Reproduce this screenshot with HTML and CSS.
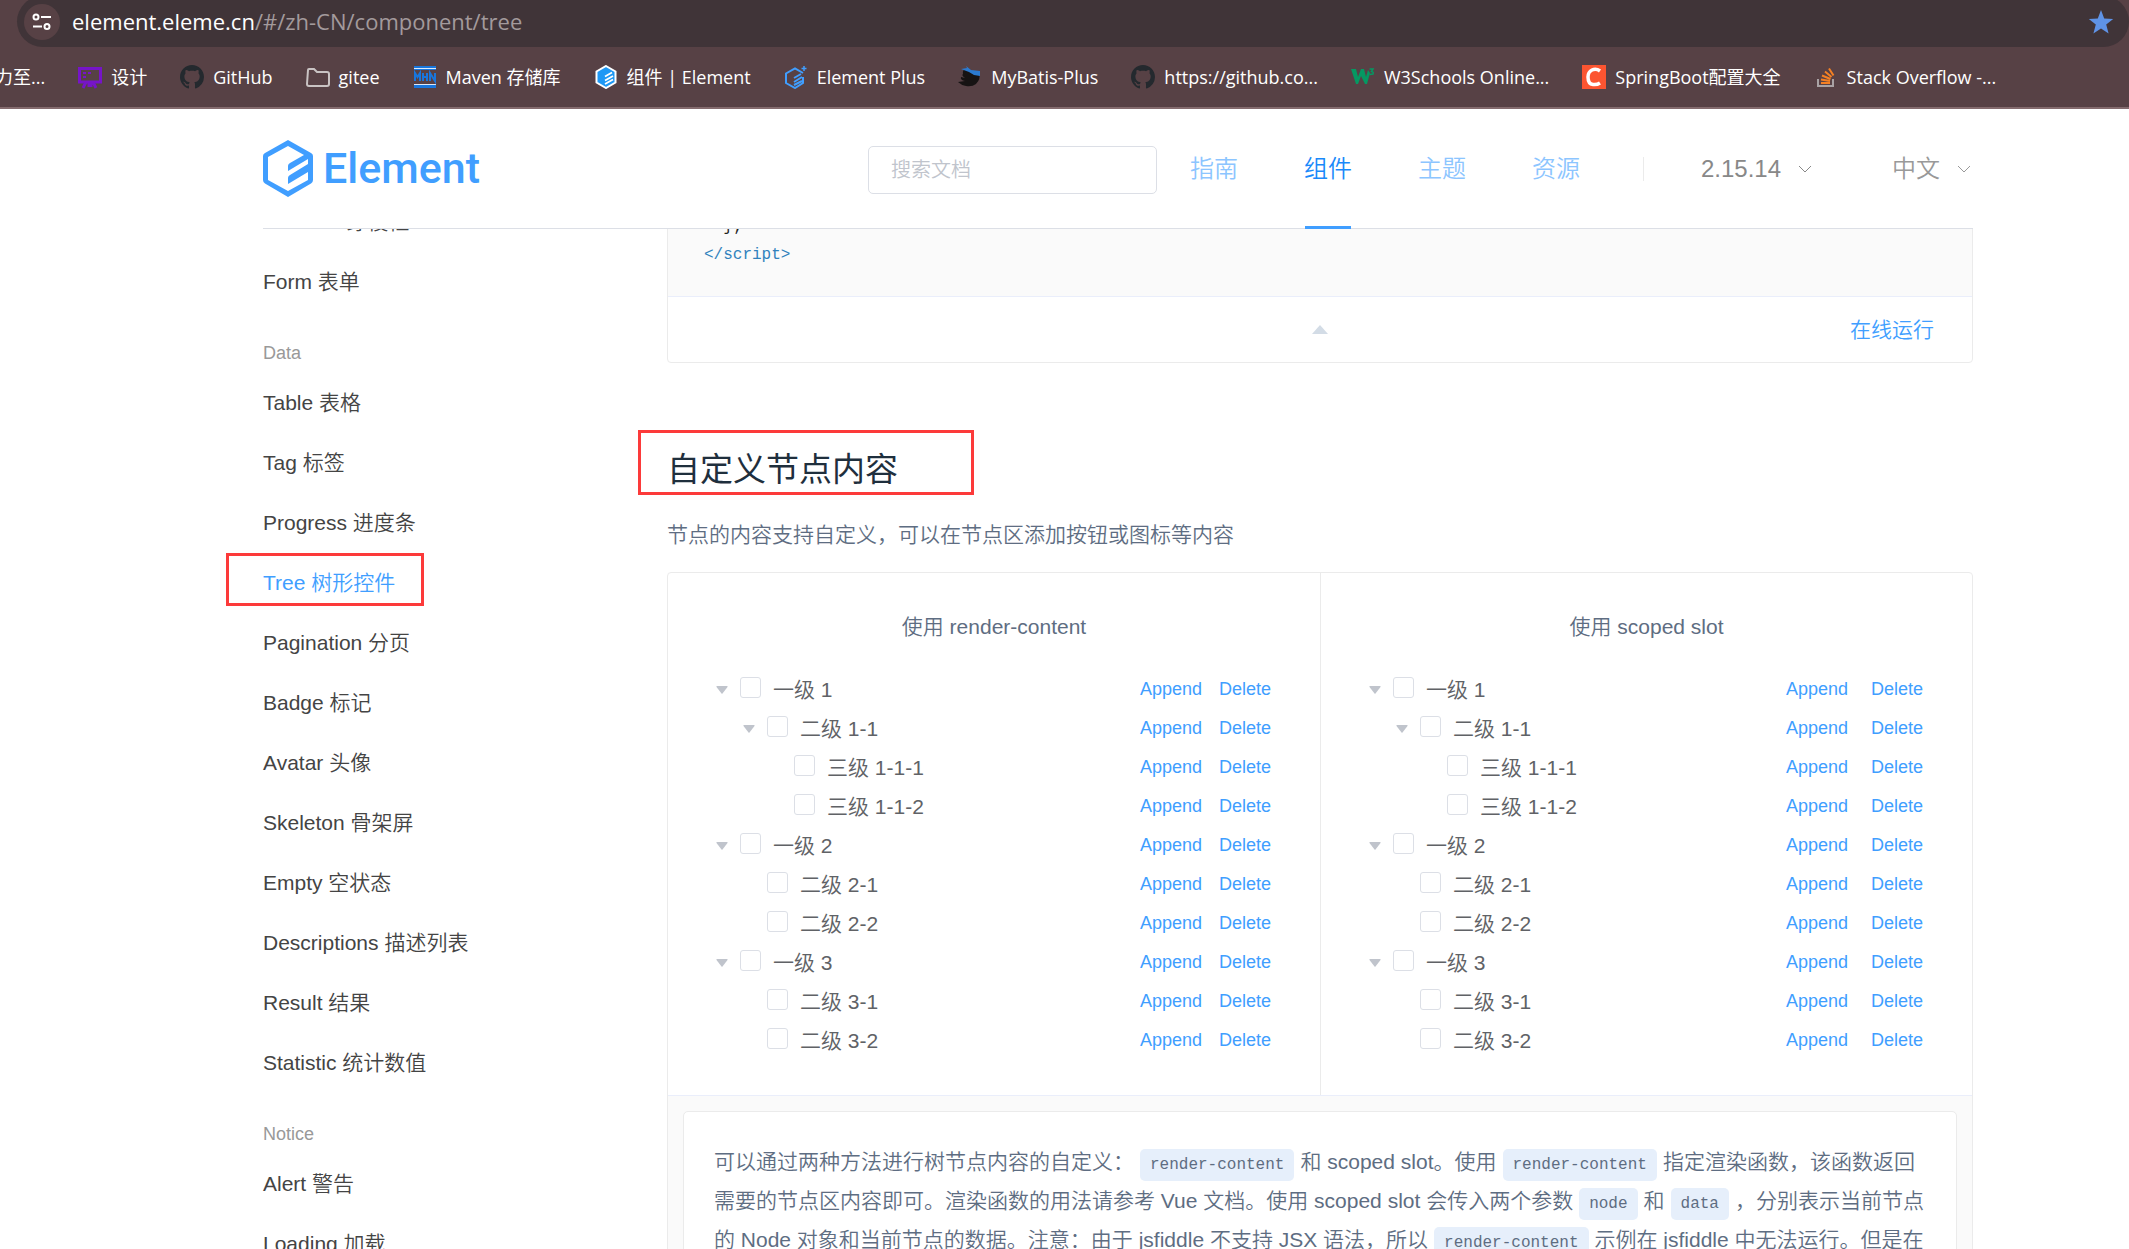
FILE: index.html
```html
<!DOCTYPE html>
<html lang="zh-CN">
<head>
<meta charset="utf-8">
<title>Element</title>
<link rel="stylesheet" href="styles.css">
</head>
<body>
<svg class="defs" aria-hidden="true">
  <symbol id="github" viewBox="0 0 16 16"><path fill="#24292e" d="M8 0C3.58 0 0 3.58 0 8c0 3.54 2.29 6.53 5.47 7.59.4.07.55-.17.55-.38 0-.19-.01-.82-.01-1.49-2.01.37-2.53-.49-2.69-.94-.09-.23-.48-.94-.82-1.13-.28-.15-.68-.52-.01-.53.63-.01 1.08.58 1.23.82.72 1.21 1.87.87 2.33.66.07-.52.28-.87.51-1.07-1.78-.2-3.64-.89-3.64-3.95 0-.87.31-1.59.82-2.15-.08-.2-.36-1.02.08-2.12 0 0 .67-.21 2.2.82.64-.18 1.32-.27 2-.27s1.36.09 2 .27c1.53-1.04 2.2-.82 2.2-.82.44 1.1.16 1.92.08 2.12.51.56.82 1.27.82 2.15 0 3.07-1.87 3.75-3.65 3.95.29.25.54.73.54 1.48 0 1.07-.01 1.93-.01 2.2 0 .21.15.46.55.38A8.01 8.01 0 0 0 16 8c0-4.42-3.58-8-8-8z"/></symbol>
  <symbol id="hexagon" viewBox="0 0 50 57"><path fill-rule="evenodd" d="M25 0 48 13Q50 14 50 16V40Q50 42 48 43.500L25 57 2 43.500Q0 42 0 40V16Q0 14 2 13ZM25 6 5 17V40L25 51 45 40V32L25 44V38Q25 36 27 35L45 24V19L25 31V26Q25 24 27 23L41 15Z"/></symbol>
  <symbol id="caret" viewBox="0 0 14 8"><path d="M1 1 7 7 13 1" fill="none" stroke="currentColor"/></symbol>
  <symbol id="expand" viewBox="0 0 12 8"><path d="M1 0H11Q12 0 11.500 1L6.500 7.500Q6 8 5.500 7.500L.5 1Q0 0 1 0Z" fill="currentColor"/></symbol>
</svg>

<div class="browser">
  <div class="address">
    <button class="site-info" aria-label="网站信息"><svg width="20" height="18" viewBox="0 0 20 18" fill="none" stroke="#fff" stroke-width="2"><circle cx="4" cy="4" r="2.500"/><path d="M9 4H19M1 13.500H10"/><circle cx="15" cy="13.500" r="2.500"/></svg></button>
    <span class="url"><b>element.eleme.cn</b>/#/zh-CN/component/tree</span>
    <svg class="star" width="26" height="24" viewBox="0 0 26 24"><path fill="#5f93e6" d="m13 0 3.200 8.500 9 .4-7 5.700 2.400 8.900-7.600-5-7.600 5 2.400-8.900-7-5.700 9-.4Z"/></svg>
  </div>
  <nav class="bookmarks" aria-label="书签">
    <a href="#">力至...</a>
    <a href="#"><svg viewBox="0 0 24 24"><path d="M1.500 3.500H22.500V17H1.500Z" fill="none" stroke="#7614c8" stroke-width="3"/><path d="M8 17 5 23M15 17 18 23M11 17V22M13 17V22" stroke="#7614c8" stroke-width="3"/><path d="M5 7H8V9H5ZM10 7H13V9H10ZM5 11H8V13H5Z" fill="#7614c8"/></svg>设计</a>
    <a href="#"><svg><use href="#github"/></svg>GitHub</a>
    <a href="#"><svg viewBox="0 0 24 24"><path d="M2 5Q2 4 3 4H8L11 7H21Q23 7 23 9V19Q23 21 21 21H3Q1 21 1 19Z" fill="none" stroke="#c9c3c3" stroke-width="2"/></svg>gitee</a>
    <a href="#"><svg viewBox="0 0 24 24"><path fill="#1976dc" d="M1 1H23V5H1ZM1 20H23V23H1Z"/><path stroke="#dce8f8" d="M1 3.500H23M1 19.500H23"/><path d="M2 16V8L4.500 12 7 8V16M10 8V16M14 8V16M10 12H14M17 16V8L22 16V8" fill="none" stroke="#1976dc" stroke-width="2"/></svg>Maven 存储库</a>
    <a href="#"><svg viewBox="0 0 24 24"><path d="M12 1 21.500 6.500V17.500L12 23 2.500 17.500V6.500Z" fill="#1e98f5" stroke="#fff" stroke-width="2"/><path d="M11 11.500 18 7.500M11 15.500 19 11M11 19 19 14.500" stroke="#fff" stroke-width="1.800"/></svg>组件 | Element</a>
    <a href="#"><svg viewBox="0 0 24 24"><path d="M19 8 11 3.500 2 8.500V18L11 23 19 18V12M10 13 17 9M10 17 18 12M10 20 18 16" fill="none" stroke="#409eff" stroke-width="2"/><path d="M20 1V6M17.500 3.500H22.500" stroke="#409eff" stroke-width="1.500"/></svg>Element Plus</a>
    <a href="#"><svg viewBox="0 0 24 24"><path d="M5 9Q4 3 10 5L21 8Q23 14 18 19 14 22 8 21 3 20 0 17L7 16Q2 15 3 12L7 13Q3 10 5 9Z" fill="#161313"/><path d="M3 4 9 3 8 1 13 5 22 6V11L16 10 11 7Z" fill="#2b7ad0"/></svg>MyBatis-Plus</a>
    <a href="#"><svg><use href="#github"/></svg>https://github.co...</a>
    <a href="#"><svg viewBox="0 0 24 24"><path d="M0 4H5L7 12 10 4H13L15 12 17 5 19 8 16 19H14L10 11 7 19H5Z" fill="#059862"/><path d="M18.500 4H22L20.500 6.500Q23 7 22 9L18.500 9.500" fill="none" stroke="#059862" stroke-width="1.500"/></svg>W3Schools Online...</a>
    <a href="#"><svg viewBox="0 0 24 24"><path fill="#fc5531" d="M0 0H24V24H0Z"/><path d="M18 6Q14 3 10 5 6 7 6 12 6 19 11 19.500 15 20 18 18" fill="none" stroke="#fff" stroke-width="3.500"/></svg>SpringBoot配置大全</a>
    <a href="#"><svg viewBox="0 0 24 24"><path d="M4 14V21H19V14" fill="none" stroke="#a9a2a4" stroke-width="2"/><path d="M7 18H16M7 14.500 16 16M8 10.500 16.500 14M11 6.500 17.500 12M15 3.500 19.500 10.500" stroke="#f48024" stroke-width="2"/></svg>Stack Overflow -...</a>
  </nav>
</div>

<header class="header">
  <a class="logo" href="#"><svg width="50" height="57" fill="#409eff"><use href="#hexagon"/></svg>Element</a>
  <input class="search" type="text" placeholder="搜索文档" aria-label="搜索文档">
  <nav class="nav">
    <a href="#">指南</a>
    <a href="#" class="active">组件</a>
    <a href="#">主题</a>
    <a href="#">资源</a>
  </nav>
  <div class="selectors">
    <button class="version">2.15.14<svg><use href="#caret"/></svg></button>
    <button>中文<svg><use href="#caret"/></svg></button>
  </div>
</header>

<main class="main">
  <nav class="side" aria-label="组件">
    <ul>
      <li><a href="#">Transfer 穿梭框</a></li>
      <li><a href="#">Form 表单</a></li>
    </ul>
    <h4>Data</h4>
    <ul>
      <li><a href="#">Table 表格</a></li>
      <li><a href="#">Tag 标签</a></li>
      <li><a href="#">Progress 进度条</a></li>
      <li class="current"><a href="#">Tree 树形控件</a></li>
      <li><a href="#">Pagination 分页</a></li>
      <li><a href="#">Badge 标记</a></li>
      <li><a href="#">Avatar 头像</a></li>
      <li><a href="#">Skeleton 骨架屏</a></li>
      <li><a href="#">Empty 空状态</a></li>
      <li><a href="#">Descriptions 描述列表</a></li>
      <li><a href="#">Result 结果</a></li>
      <li><a href="#">Statistic 统计数值</a></li>
    </ul>
    <h4>Notice</h4>
    <ul>
      <li><a href="#">Alert 警告</a></li>
      <li><a href="#">Loading 加载</a></li>
    </ul>
  </nav>

  <article class="content">
    <section class="demo demo-top">
      <pre class="code"><span class="plain">  };</span>
&lt;/script&gt;</pre>
      <div class="control">
        <button class="fold" aria-label="隐藏代码"><svg width="16" height="9" viewBox="0 0 16 9"><path d="M8 0 16 9H0Z" fill="#d3dce6"/></svg></button>
        <button class="run">在线运行</button>
      </div>
    </section>

    <h3>自定义节点内容</h3>
    <p class="intro">节点的内容支持自定义，可以在节点区添加按钮或图标等内容</p>

    <section class="demo">
      <div class="trees">
        <div class="block">
          <p>使用 render-content</p>
          <ul class="tree">
            <li><div class="row"><button class="toggle" aria-label="折叠"><svg><use href="#expand"/></svg></button><label><input type="checkbox">一级 1</label><span class="ops"><button>Append</button><button>Delete</button></span></div>
              <ul>
                <li><div class="row"><button class="toggle" aria-label="折叠"><svg><use href="#expand"/></svg></button><label><input type="checkbox">二级 1-1</label><span class="ops"><button>Append</button><button>Delete</button></span></div>
                  <ul>
                    <li><div class="row leaf"><label><input type="checkbox">三级 1-1-1</label><span class="ops"><button>Append</button><button>Delete</button></span></div></li>
                    <li><div class="row leaf"><label><input type="checkbox">三级 1-1-2</label><span class="ops"><button>Append</button><button>Delete</button></span></div></li>
                  </ul></li>
              </ul></li>
            <li><div class="row"><button class="toggle" aria-label="折叠"><svg><use href="#expand"/></svg></button><label><input type="checkbox">一级 2</label><span class="ops"><button>Append</button><button>Delete</button></span></div>
              <ul>
                <li><div class="row leaf"><label><input type="checkbox">二级 2-1</label><span class="ops"><button>Append</button><button>Delete</button></span></div></li>
                <li><div class="row leaf"><label><input type="checkbox">二级 2-2</label><span class="ops"><button>Append</button><button>Delete</button></span></div></li>
              </ul></li>
            <li><div class="row"><button class="toggle" aria-label="折叠"><svg><use href="#expand"/></svg></button><label><input type="checkbox">一级 3</label><span class="ops"><button>Append</button><button>Delete</button></span></div>
              <ul>
                <li><div class="row leaf"><label><input type="checkbox">二级 3-1</label><span class="ops"><button>Append</button><button>Delete</button></span></div></li>
                <li><div class="row leaf"><label><input type="checkbox">二级 3-2</label><span class="ops"><button>Append</button><button>Delete</button></span></div></li>
              </ul></li>
          </ul>
        </div>
        <div class="block slot">
          <p>使用 scoped slot</p>
          <ul class="tree">
            <li><div class="row"><button class="toggle" aria-label="折叠"><svg><use href="#expand"/></svg></button><label><input type="checkbox">一级 1</label><span class="ops"><button>Append</button><button>Delete</button></span></div>
              <ul>
                <li><div class="row"><button class="toggle" aria-label="折叠"><svg><use href="#expand"/></svg></button><label><input type="checkbox">二级 1-1</label><span class="ops"><button>Append</button><button>Delete</button></span></div>
                  <ul>
                    <li><div class="row leaf"><label><input type="checkbox">三级 1-1-1</label><span class="ops"><button>Append</button><button>Delete</button></span></div></li>
                    <li><div class="row leaf"><label><input type="checkbox">三级 1-1-2</label><span class="ops"><button>Append</button><button>Delete</button></span></div></li>
                  </ul></li>
              </ul></li>
            <li><div class="row"><button class="toggle" aria-label="折叠"><svg><use href="#expand"/></svg></button><label><input type="checkbox">一级 2</label><span class="ops"><button>Append</button><button>Delete</button></span></div>
              <ul>
                <li><div class="row leaf"><label><input type="checkbox">二级 2-1</label><span class="ops"><button>Append</button><button>Delete</button></span></div></li>
                <li><div class="row leaf"><label><input type="checkbox">二级 2-2</label><span class="ops"><button>Append</button><button>Delete</button></span></div></li>
              </ul></li>
            <li><div class="row"><button class="toggle" aria-label="折叠"><svg><use href="#expand"/></svg></button><label><input type="checkbox">一级 3</label><span class="ops"><button>Append</button><button>Delete</button></span></div>
              <ul>
                <li><div class="row leaf"><label><input type="checkbox">二级 3-1</label><span class="ops"><button>Append</button><button>Delete</button></span></div></li>
                <li><div class="row leaf"><label><input type="checkbox">二级 3-2</label><span class="ops"><button>Append</button><button>Delete</button></span></div></li>
              </ul></li>
          </ul>
        </div>
      </div>
      <div class="meta">
        <p class="description">可以通过两种方法进行树节点内容的自定义：<code>render-content</code>和 scoped slot。使用<code>render-content</code>指定渲染函数，该函数返回需要的节点区内容即可。渲染函数的用法请参考 Vue 文档。使用 scoped slot 会传入两个参数<code>node</code>和<code>data</code>，分别表示当前节点的 Node 对象和当前节点的数据。注意：由于 jsfiddle 不支持 JSX 语法，所以<code>render-content</code>示例在 jsfiddle 中无法运行。但是在</p>
      </div>
    </section>
  </article>
</main>
</body>
</html>
```

FILE: styles.css
```css
*,
*::after {
  box-sizing: border-box;
}

body {
  display: flex;
  flex-direction: column;
  height: 100vh;
  margin: 0;
  overflow: hidden;
  background: #fff;
  color: #606266;
  font: 21px/39px "Liberation Sans", "Noto Sans CJK SC", sans-serif;
  font-weight: 350;
}

a {
  color: inherit;
  text-decoration: none;
}

button {
  padding: 0;
  border: 0;
  background: none;
  color: inherit;
  font: inherit;
}

ul {
  margin: 0;
  padding: 0;
  list-style: none;
}

.defs {
  position: absolute;
  width: 0;
  height: 0;
}

/* browser chrome */
.browser {
  flex: none;
  overflow: hidden;
  border-bottom: 2px solid #846b6e;
  background: #574145;
  color: #fff;
  font-family: "Open Sans", "Noto Sans CJK SC", sans-serif;
  font-weight: 400;
}

.address {
  display: flex;
  align-items: center;
  height: 51px;
  margin: -4px 0 0 17px;
  padding: 0 15px 0 7px;
  border-radius: 26px;
  background: #403438;
}

.site-info {
  display: grid;
  place-items: center;
  width: 36px;
  height: 36px;
  border-radius: 50%;
  background: #574145;
}

.url {
  flex: 1;
  margin-left: 12px;
  color: #a39a9c;
  font-size: 22px;
}

.url b {
  color: #fff;
  font-weight: 400;
}

.bookmarks {
  display: flex;
  gap: 33px;
  height: 60px;
  margin-left: -5px;
  font-size: 18px;
  line-height: 60px;
  white-space: nowrap;
}

.bookmarks a {
  display: flex;
  align-items: center;
  gap: 9px;
}

.bookmarks svg {
  width: 24px;
  height: 24px;
}

/* site header */
.header {
  display: flex;
  flex: none;
  align-items: center;
  height: 120px;
  margin: 0 156px 0 263px;
  border-bottom: 1px solid #dcdfe6;
}

.logo {
  display: flex;
  align-items: center;
  gap: 10px;
  margin-right: auto;
  color: #409eff;
  font: 500 43px/57px Roboto, sans-serif;
}

.search {
  width: 289px;
  height: 48px;
  margin-top: 2px;
  padding: 2px 22px 0;
  border: 1px solid #dcdfe6;
  border-radius: 5px;
  font: inherit;
  font-size: 20px;
}

.search::placeholder {
  color: #c0c4cc;
}

.nav {
  display: flex;
  align-self: stretch;
  font-size: 24px;
  line-height: 120px;
}

.nav a {
  position: relative;
  padding: 0 33px;
  color: #8cc5ff;
}

.nav .active {
  color: #1989fa;
}

.nav .active::after {
  position: absolute;
  right: 34px;
  bottom: -1px;
  left: 34px;
  height: 3px;
  background: #409eff;
  content: "";
}

.selectors {
  display: flex;
  gap: 80px;
  margin: 0 2px 0 30px;
  padding-left: 57px;
  border-left: 1px solid #ebebeb;
  color: #999;
  font-size: 24px;
  line-height: 24px;
}

.selectors button {
  display: flex;
  align-items: center;
  gap: 17px;
}

.selectors .version {
  color: #888;
}

.selectors svg {
  width: 14px;
  height: 8px;
}

/* page body, scrolled under the header */
.main {
  display: flex;
  flex: 1;
  min-height: 0;
  margin: 0 156px 0 226px;
  padding-left: 37px;
  overflow: hidden;
}

.side {
  flex: 0 0 404px;
  margin-top: -37px;
  color: #444;
}

.side li {
  position: relative;
  line-height: 60px;
}

.side h4 {
  margin: 22px 0 0;
  color: #999;
  font-size: 18px;
  font-weight: 400;
  line-height: 39px;
}

.side .current {
  color: #409eff;
}

.current::after,
h3::after {
  position: absolute;
  border: 3px solid #fc3a3a;
  content: "";
}

.current::after {
  top: 0;
  left: -37px;
  width: 198px;
  height: 53px;
}

.content {
  flex: 1;
  min-width: 0;
  color: #5e6d82;
}

.demo {
  border: 1px solid #ebebeb;
  border-radius: 4px;
}

.demo-top {
  margin-top: -17px;
}

.code {
  margin: 0;
  padding: 0 36px 27px;
  background: #fafafa;
  color: #3182bd;
  font: 16px/28px "Liberation Mono", monospace;
}

.plain {
  color: #222;
}

.control {
  display: grid;
  grid-template-columns: 1fr auto 1fr;
  align-items: center;
  height: 66px;
  padding: 0 38px;
  border-top: 1px solid #eaeefb;
}

.fold {
  display: flex;
  grid-column: 2;
}

.run {
  justify-self: end;
  color: #409eff;
}

h3 {
  position: relative;
  margin: 82px 0 20px;
  color: #1f2f3d;
  font-size: 33px;
  font-weight: 400;
  line-height: 50px;
}

h3::after {
  top: -15px;
  left: -29px;
  width: 336px;
  height: 65px;
}

.intro {
  margin: 0 0 18px;
}

.trees {
  display: grid;
  grid-template-columns: 1fr 1fr;
}

.block {
  padding: 34px 36px 35px;
}

.block + .block {
  border-left: 1px solid #ebebeb;
}

.block p {
  margin: 0 0 24px;
  text-align: center;
}

.tree {
  color: #606266;
}

.tree ul {
  padding-left: 27px;
}

.row {
  display: flex;
  align-items: center;
  height: 39px;
}

.leaf {
  padding-left: 36px;
}

.toggle {
  display: grid;
  place-items: center;
  width: 36px;
  height: 36px;
  color: #c0c4cc;
}

.toggle svg {
  width: 12px;
  height: 8px;
}

.row label {
  display: flex;
  align-items: center;
  gap: 12px;
}

.row input {
  width: 21px;
  height: 21px;
  margin: 0 0 4px;
  border: 1px solid #dcdfe6;
  border-radius: 3px;
  appearance: none;
}

.ops {
  display: flex;
  gap: 17px;
  margin-left: auto;
  padding-right: 13px;
  color: #409eff;
  font-size: 18px;
}

.slot .ops {
  gap: 23px;
}

.meta {
  padding: 15px;
  border-top: 1px solid #eaeefb;
  background: #fafafa;
}

.description {
  margin: 0;
  padding: 30px;
  border: 1px solid #ebebeb;
  border-radius: 5px;
  background: #fff;
}

code {
  display: inline-block;
  height: 32px;
  margin: 0 6px;
  padding: 0 10px;
  border-radius: 5px;
  background: #e6effb;
  font: 16px/32px "Liberation Mono", monospace;
}
```
